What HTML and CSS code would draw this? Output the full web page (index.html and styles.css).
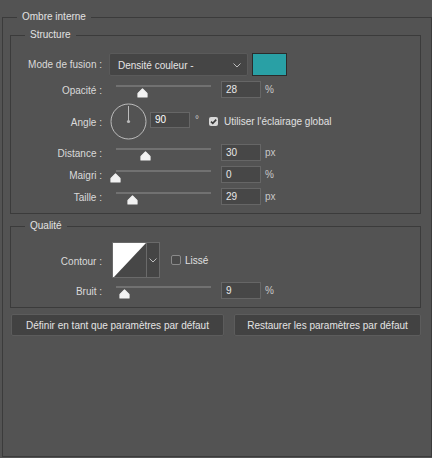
FILE: index.html
```html
<!DOCTYPE html>
<html lang="fr">
<head>
<meta charset="utf-8">
<title>Ombre interne</title>
<link rel="stylesheet" href="styles.css">
</head>
<body>
<fieldset class="group outer">
  <legend class="legend outer-legend">Ombre interne</legend>

  <fieldset class="group sub structure">
    <legend class="legend sub-legend">Structure</legend>

    <div class="row row-mode">
      <span class="label">Mode de fusion :</span>
      <div class="select">
        <span class="select-text">Densité couleur -</span>
        <svg class="chevron" width="8" height="5" viewBox="0 0 8 5"><polyline points="0.5,0.5 4,4 7.5,0.5" fill="none" stroke="#bdbdbd" stroke-width="1"/></svg>
      </div>
      <span class="swatch"></span>
    </div>

    <div class="row row-slider">
      <span class="label">Opacité :</span>
      <div class="slider"><span class="track"></span>
        <svg class="thumb" style="left:21px" width="11" height="10" viewBox="0 0 11 10"><path d="M5.5 1 L10 5.5 L10 9 L1 9 L1 5.5 Z" fill="#f2f2f2" stroke="#f2f2f2" stroke-width="1.2" stroke-linejoin="round"/></svg>
      </div>
      <span class="field">28</span><span class="unit">%</span>
    </div>

    <div class="row row-angle">
      <span class="label">Angle :</span>
      <svg class="dial" width="37" height="37" viewBox="0 0 37 37">
        <circle cx="18.5" cy="18.5" r="17.5" fill="none" stroke="#bcbcbc" stroke-width="1"/>
        <line x1="18.5" y1="18.5" x2="18.5" y2="3" stroke="#bcbcbc" stroke-width="1"/>
        <circle cx="18.5" cy="18.5" r="1.6" fill="#bcbcbc"/>
      </svg>
      <span class="field field-angle">90</span>
      <span class="unit deg">°</span>
      <span class="check checked">
        <svg width="9" height="9" viewBox="0 0 9 9"><polyline points="2,4.6 3.8,6.4 7.2,2.6" fill="none" stroke="#3a3a3a" stroke-width="1.6"/></svg>
      </span>
      <span class="check-label">Utiliser l'éclairage global</span>
    </div>

    <div class="row row-slider">
      <span class="label">Distance :</span>
      <div class="slider"><span class="track"></span>
        <svg class="thumb" style="left:24px" width="11" height="10" viewBox="0 0 11 10"><path d="M5.5 1 L10 5.5 L10 9 L1 9 L1 5.5 Z" fill="#f2f2f2" stroke="#f2f2f2" stroke-width="1.2" stroke-linejoin="round"/></svg>
      </div>
      <span class="field">30</span><span class="unit">px</span>
    </div>

    <div class="row row-slider">
      <span class="label">Maigri :</span>
      <div class="slider"><span class="track"></span>
        <svg class="thumb" style="left:-6px" width="11" height="10" viewBox="0 0 11 10"><path d="M5.5 1 L10 5.5 L10 9 L1 9 L1 5.5 Z" fill="#f2f2f2" stroke="#f2f2f2" stroke-width="1.2" stroke-linejoin="round"/></svg>
      </div>
      <span class="field">0</span><span class="unit">%</span>
    </div>

    <div class="row row-slider">
      <span class="label">Taille :</span>
      <div class="slider"><span class="track"></span>
        <svg class="thumb" style="left:11px" width="11" height="10" viewBox="0 0 11 10"><path d="M5.5 1 L10 5.5 L10 9 L1 9 L1 5.5 Z" fill="#f2f2f2" stroke="#f2f2f2" stroke-width="1.2" stroke-linejoin="round"/></svg>
      </div>
      <span class="field">29</span><span class="unit">px</span>
    </div>
  </fieldset>

  <fieldset class="group sub quality">
    <legend class="legend sub-legend">Qualité</legend>

    <div class="row row-contour">
      <span class="label">Contour :</span>
      <div class="contour">
        <svg class="contour-preview" width="33" height="34" viewBox="0 0 33 34" preserveAspectRatio="none">
          <rect x="0" y="0" width="33" height="34" fill="#474747"/>
          <polygon points="0,0 33,0 1,34 0,34" fill="#ffffff"/>
        </svg>
        <span class="contour-drop">
          <svg width="8" height="5" viewBox="0 0 8 5"><polyline points="0.5,0.5 4,4 7.5,0.5" fill="none" stroke="#bdbdbd" stroke-width="1"/></svg>
        </span>
      </div>
      <span class="check"></span>
      <span class="check-label">Lissé</span>
    </div>

    <div class="row row-slider row-bruit">
      <span class="label">Bruit :</span>
      <div class="slider"><span class="track"></span>
        <svg class="thumb" style="left:3px" width="11" height="10" viewBox="0 0 11 10"><path d="M5.5 1 L10 5.5 L10 9 L1 9 L1 5.5 Z" fill="#f2f2f2" stroke="#f2f2f2" stroke-width="1.2" stroke-linejoin="round"/></svg>
      </div>
      <span class="field">9</span><span class="unit">%</span>
    </div>
  </fieldset>

  <div class="buttons">
    <button class="btn btn-left" type="button">Définir en tant que paramètres par défaut</button>
    <button class="btn btn-right" type="button">Restaurer les paramètres par défaut</button>
  </div>
</fieldset>
</body>
</html>
```

FILE: styles.css
```css
html, body {
  margin: 0;
  padding: 0;
  background: #535353;
}

body {
  width: 432px;
  height: 458px;
  overflow: hidden;
  font-family: "Liberation Sans", Arial, sans-serif;
  font-size: 10px;
  color: #dadada;
}

.group {
  margin: 0;
  border: 1px solid #3b3b3b;
  min-width: 0;
  box-sizing: border-box;
}

.outer {
  margin: 10px 0 0 2px;
  width: 430px;
  height: 447px;
  padding: 4px 10px 0 7px;
}

.legend {
  line-height: 14px;
  height: 14px;
  padding: 0 5px;
  color: #e2e2e2;
}

.outer-legend {
  margin-left: 7px;
}

.sub-legend {
  margin-left: 14px;
}

.sub {
  width: 411px;
  padding: 11px 0 8px 0;
}

.quality {
  margin-top: 5px;
  padding: 9px 0 8px 0;
}

.row {
  display: flex;
  align-items: center;
}

.label {
  width: 91px;
  flex: none;
  text-align: right;
  white-space: nowrap;
}

/* Mode de fusion */
.row-mode {
  height: 23px;
}

.select {
  margin-left: 7px;
  width: 139px;
  height: 23px;
  box-sizing: border-box;
  background: #454545;
  border: 1px solid #5a5a5a;
  border-radius: 2px;
  display: flex;
  align-items: center;
  justify-content: space-between;
  padding: 1px 6px 0 8px;
  color: #e4e4e4;
}

.chevron {
  display: block;
}

.swatch {
  margin-left: 4px;
  width: 35px;
  height: 23px;
  box-sizing: border-box;
  background: #29a0a5;
  border: 1px solid #2b2b2b;
}

/* sliders */
.row-slider {
  height: 17px;
  margin-top: 5px;
  align-items: flex-start;
}

.row-slider .label {
  line-height: 17px;
  padding-top: 1px;
}

.slider {
  position: relative;
  margin-left: 14px;
  width: 95px;
  height: 17px;
}

.track {
  display: block;
  margin-top: 4px;
  height: 2px;
  background: #717171;
}

.thumb {
  position: absolute;
  top: 7px;
}

.field {
  margin-left: 10px;
  width: 40px;
  height: 17px;
  box-sizing: border-box;
  background: #474747;
  border: 1px solid #666666;
  padding: 0 4px;
  line-height: 15px;
  color: #e8e8e8;
}

.unit {
  margin-left: 4px;
  line-height: 17px;
  color: #c8c8c8;
}

/* Angle */
.row-angle {
  height: 36px;
  margin-top: 5px;
}

.row-angle .label {
  padding-top: 2px;
}

.dial {
  margin-left: 8px;
  display: block;
}

.field-angle {
  margin-left: 3px;
  height: 16px;
  line-height: 14px;
  color: #ffffff;
  margin-top: -2px;
}

.deg {
  margin-left: 5px;
  margin-top: -4px;
}

.check {
  width: 10px;
  height: 10px;
  box-sizing: border-box;
  border: 1px solid #8a8a8a;
  background: #4a4a4a;
  border-radius: 2px;
  flex: none;
}

.check.checked {
  width: 9px;
  height: 9px;
  margin-left: 10px;
  border: 0;
  background: #d9d9d9;
  display: flex;
}

.check svg {
  display: block;
}

.check-label {
  margin-left: 6px;
  color: #e0e0e0;
}

/* Contour */
.row-contour {
  height: 36px;
}

.row-contour .label {
  padding-top: 3px;
}

.contour {
  margin-left: 10px;
  display: flex;
  height: 36px;
  box-sizing: border-box;
  border: 1px solid #6a6a6a;
}

.contour-preview {
  display: block;
  width: 33px;
  height: 34px;
}

.contour-drop {
  width: 12px;
  border-left: 1px solid #6a6a6a;
  background: #454545;
  display: flex;
  align-items: center;
  justify-content: center;
}

.row-contour .check {
  margin-left: 11px;
}

.row-contour .check-label {
  margin-left: 4px;
}

.row-bruit {
  margin-top: 4px;
}

/* Buttons */
.buttons {
  margin-top: 6px;
  display: flex;
  gap: 10px;
  padding-left: 1px;
}

.btn {
  height: 22px;
  margin: 0;
  padding: 0;
  box-sizing: border-box;
  background: #424242;
  border: 1px solid #5c5c5c;
  border-radius: 2px;
  color: #e4e4e4;
  font-family: "Liberation Sans", Arial, sans-serif;
  font-size: 10px;
  text-align: center;
}

.btn-left {
  width: 213px;
}

.btn-right {
  width: 187px;
}
```
